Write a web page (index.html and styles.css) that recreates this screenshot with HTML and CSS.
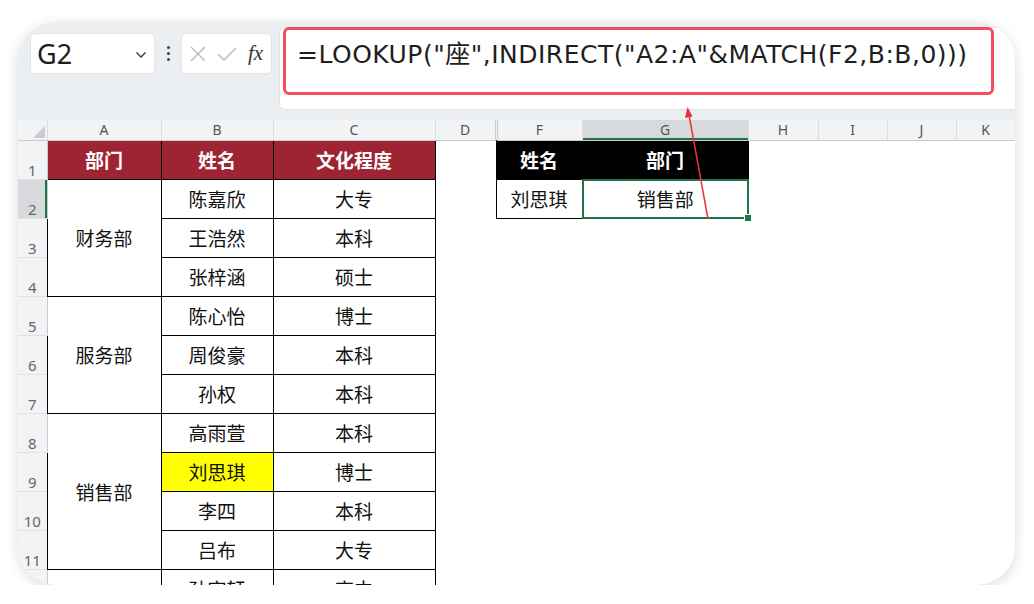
FILE: index.html
```html
<!DOCTYPE html>
<html lang="zh">
<head>
    <meta charset="UTF-8">
    <title>LOOKUP INDIRECT</title>
    <link rel="stylesheet" href="styles.css">
</head>
<body>
    <div class="card">
        <div class="toolbar">
            <div class="name-box">
                <span class="cell-ref">G2</span>
                <svg class="chevron" width="12" height="8" viewBox="0 0 12 8"><path d="M1.5 1.5 L6 6 L10.5 1.5" fill="none" stroke="#333" stroke-width="1.3"/></svg>
            </div>
            <div class="dots"><i></i><i></i><i></i></div>
            <div class="fx-box">
                <svg width="20" height="20" viewBox="0 0 20 20"><path d="M3 3 L17 17 M17 3 L3 17" stroke="#b8b8b8" stroke-width="1.4"/></svg>
                <svg width="22" height="20" viewBox="0 0 22 20"><path d="M2 10 L8 16 L20 4" fill="none" stroke="#b8b8b8" stroke-width="1.4"/></svg>
                <span class="fx">fx</span>
            </div>
            <div class="formula-area">
                <div class="formula">=LOOKUP("座",INDIRECT("A2:A"&amp;MATCH(F2,B:B,0)))</div>
            </div>
        </div>

        <div class="grid">
            <table>
                <colgroup>
                    <col class="c-hdr"><col class="c-a"><col class="c-b"><col class="c-c"><col class="c-d">
                    <col class="c-f"><col class="c-g"><col class="c-h"><col class="c-i"><col class="c-j"><col class="c-k">
                </colgroup>
                <thead>
                    <tr class="col-heads">
                        <th class="corner"><span class="tri"></span></th>
                        <th>A</th><th>B</th><th>C</th><th class="hidden-after">D</th>
                        <th>F</th><th class="active">G</th><th>H</th><th>I</th><th>J</th><th>K</th>
                    </tr>
                </thead>
                <tbody>
                    <tr>
                        <td class="rh">1</td>
                        <td class="b head">部门</td><td class="b head">姓名</td><td class="b head">文化程度</td>
                        <td></td>
                        <td class="b head2">姓名</td><td class="b head2">部门</td>
                        <td></td><td></td><td></td><td></td>
                    </tr>
                    <tr>
                        <td class="rh active">2</td>
                        <td class="b" rowspan="3">财务部</td><td class="b">陈嘉欣</td><td class="b">大专</td>
                        <td></td>
                        <td class="b">刘思琪</td><td class="sel">销售部</td>
                        <td></td><td></td><td></td><td></td>
                    </tr>
                    <tr><td class="rh">3</td><td class="b">王浩然</td><td class="b">本科</td><td colspan="8"></td></tr>
                    <tr><td class="rh">4</td><td class="b">张梓涵</td><td class="b">硕士</td><td colspan="8"></td></tr>
                    <tr><td class="rh">5</td><td class="b" rowspan="3">服务部</td><td class="b">陈心怡</td><td class="b">博士</td><td colspan="8"></td></tr>
                    <tr><td class="rh">6</td><td class="b">周俊豪</td><td class="b">本科</td><td colspan="8"></td></tr>
                    <tr><td class="rh">7</td><td class="b">孙权</td><td class="b">本科</td><td colspan="8"></td></tr>
                    <tr><td class="rh">8</td><td class="b" rowspan="4">销售部</td><td class="b">高雨萱</td><td class="b">本科</td><td colspan="8"></td></tr>
                    <tr><td class="rh">9</td><td class="b hl">刘思琪</td><td class="b">博士</td><td colspan="8"></td></tr>
                    <tr><td class="rh">10</td><td class="b">李四</td><td class="b">本科</td><td colspan="8"></td></tr>
                    <tr><td class="rh">11</td><td class="b">吕布</td><td class="b">大专</td><td colspan="8"></td></tr>
                    <tr><td class="rh">12</td><td class="b" rowspan="3"></td><td class="b">孙宇轩</td><td class="b">高中</td><td colspan="8"></td></tr>
                </tbody>
            </table>
        </div>

        <svg class="arrow" width="40" height="120" viewBox="0 0 40 120">
            <path d="M29 112 L10 8" stroke="#e8303f" stroke-width="1.5" fill="none"/>
            <path d="M8.5 0 L6 11 L13.5 9.5 Z" fill="#e8303f"/>
        </svg>
    </div>
</body>
</html>
```

FILE: styles.css
```css
* {
    margin: 0;
    padding: 0;
    box-sizing: border-box;
}

body {
    background-color: #ffffff;
    padding: 22px 0 0 18px;
    font-family: "Noto Sans", "Noto Sans CJK SC", sans-serif;
}

.card {
    position: relative;
    width: 997px;
    height: 563px;
    border-radius: 38px;
    overflow: hidden;
    background-color: #ffffff;
    box-shadow: 0 3px 14px rgba(0, 0, 0, 0.14);
    display: flex;
    flex-direction: column;
}

/* toolbar */
.toolbar {
    height: 98px;
    flex: none;
    background-color: #eceff2;
    display: flex;
    align-items: flex-start;
}

.name-box {
    margin: 11px 0 0 12px;
    width: 125px;
    height: 41px;
    background-color: #ffffff;
    border: 1px solid #e2e4e7;
    border-radius: 5px;
    display: flex;
    align-items: center;
    justify-content: space-between;
    padding: 0 7px 0 6px;
}

.cell-ref {
    font-size: 27px;
    color: #1e1e1e;
    line-height: 1;
}

.chevron {
    margin-top: 2px;
}

.dots {
    width: 26px;
    height: 41px;
    margin-top: 11px;
    display: flex;
    flex-direction: column;
    align-items: center;
    justify-content: center;
    gap: 3px;
}

.dots i {
    width: 3px;
    height: 3px;
    background-color: #444;
    border-radius: 50%;
}

.fx-box {
    margin-top: 11px;
    width: 91px;
    height: 41px;
    background-color: #ffffff;
    border: 1px solid #e2e4e7;
    border-radius: 5px;
    display: flex;
    align-items: center;
    gap: 8px;
    padding-left: 6px;
}

.fx {
    font-family: "Liberation Serif", serif;
    font-style: italic;
    font-size: 21px;
    color: #333;
    margin-left: 2px;
}

.formula-area {
    margin: 5px 0 0 7px;
    flex: 1;
    height: 83px;
    background-color: #ffffff;
    border-radius: 6px 0 0 6px;
    border: 1px solid #e0e2e5;
    border-right: none;
    padding-left: 3px;
}

.formula {
    width: 711px;
    height: 68px;
    border: 3px solid #f24f5e;
    border-radius: 6px;
    margin-top: -1px;
    padding: 4px 0 0 11px;
    font-family: "DejaVu Sans", "Noto Sans CJK SC", sans-serif;
    font-size: 25px;
    letter-spacing: 0.5px;
    color: #1e1e1e;
    white-space: nowrap;
}

/* grid */
.grid {
    flex: 1;
    overflow: hidden;
}

table {
    border-collapse: collapse;
    table-layout: fixed;
    width: 997px;
    font-family: "Noto Sans CJK SC", sans-serif;
    font-size: 19px;
    color: #111;
}

.c-hdr { width: 29px; }
.c-a { width: 114px; }
.c-b { width: 112px; }
.c-c { width: 162px; }
.c-d { width: 61px; }
.c-f { width: 86px; }
.c-g { width: 166px; }
.c-h { width: 70px; }
.c-i { width: 69px; }
.c-j { width: 69px; }
.c-k { width: 59px; }

.col-heads th {
    height: 20px;
    background-color: #f2f3f5;
    font-family: "Noto Sans", sans-serif;
    font-weight: normal;
    font-size: 14px;
    color: #555;
    border-right: 1px solid #dcdde0;
    border-bottom: 1px solid #c8c9cc;
    line-height: 18px;
}

.col-heads th.hidden-after {
    border-right: 3px double #c8c9cc;
}

.col-heads th.active {
    background-color: #d7d9dc;
    box-shadow: inset 0 -2px 0 #217346;
}

.corner {
    position: relative;
}

.tri {
    position: absolute;
    right: 2px;
    bottom: 2px;
    width: 0;
    height: 0;
    border-left: 12px solid transparent;
    border-bottom: 12px solid #c9cbce;
}

tbody tr {
    height: 39px;
}

td {
    text-align: center;
    vertical-align: middle;
    padding: 0;
}

td.rh {
    background-color: #f2f3f5;
    font-family: "Noto Sans", sans-serif;
    font-size: 15px;
    color: #666;
    vertical-align: bottom;
    padding-bottom: 0;
    line-height: 18px;
    border-bottom: 1px solid #e0e1e4;
    border-right: 1px solid #c8c9cc;
}

td.rh.active {
    background-color: #d7d9dc;
    box-shadow: inset -2px 0 0 #217346;
}

td.b {
    border: 1px solid #000;
}

td.head {
    background-color: #9e2434;
    color: #ffffff;
    font-weight: bold;
}

td.head2 {
    background-color: #000;
    color: #ffffff;
    font-weight: bold;
}

td.hl {
    background-color: #ffff00;
}

td.sel {
    position: relative;
    border-bottom: 1px solid #000;
}

td.sel::after {
    content: "";
    position: absolute;
    left: -1px;
    top: -1px;
    right: -1px;
    bottom: -1px;
    border: 2px solid #217346;
}

td.sel::before {
    content: "";
    position: absolute;
    right: -4px;
    bottom: -4px;
    width: 6px;
    height: 6px;
    background-color: #217346;
    border: 1px solid #fff;
    z-index: 1;
}

.arrow {
    position: absolute;
    left: 661px;
    top: 85px;
}
```
